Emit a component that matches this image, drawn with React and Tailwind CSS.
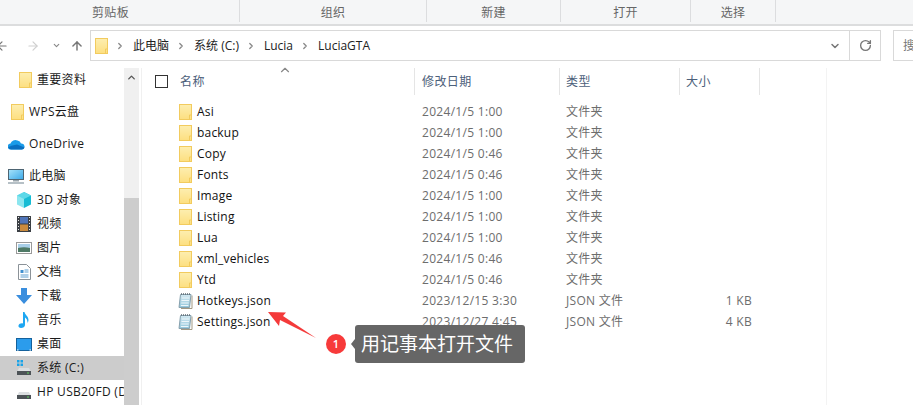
import { ArrowLeft, ArrowRight, ArrowUp, ChevronDown, ChevronRight, ChevronUp, RotateCw } from 'lucide-react';

const uiFont = { fontFamily: '"Open Sans", "Noto Sans CJK SC", sans-serif' };

const ribbonGroups = [
  { label: '剪贴板', w: 'w-[240px] pr-[18px]' },
  { label: '组织', w: 'w-[187px]' },
  { label: '新建', w: 'w-[134px]' },
  { label: '打开', w: 'w-[130px]' },
  { label: '选择', w: 'w-[85px]' },
];

const files = [
  { name: 'Asi', date: '2024/1/5 1:00', type: '文件夹' },
  { name: 'backup', date: '2024/1/5 1:00', type: '文件夹' },
  { name: 'Copy', date: '2024/1/5 0:46', type: '文件夹' },
  { name: 'Fonts', date: '2024/1/5 0:46', type: '文件夹' },
  { name: 'Image', date: '2024/1/5 1:00', type: '文件夹' },
  { name: 'Listing', date: '2024/1/5 1:00', type: '文件夹' },
  { name: 'Lua', date: '2024/1/5 1:00', type: '文件夹' },
  { name: 'xml_vehicles', date: '2024/1/5 0:46', type: '文件夹' },
  { name: 'Ytd', date: '2024/1/5 0:46', type: '文件夹' },
  { name: 'Hotkeys.json', date: '2023/12/15 3:30', type: 'JSON 文件', size: '1 KB', note: true },
  { name: 'Settings.json', date: '2023/12/27 4:45', type: 'JSON 文件', size: '4 KB', note: true },
];

function FolderIcon() {
  return (
    <svg width="13" height="16" viewBox="0 0 13 16" className="shrink-0">
      <defs>
        <linearGradient id="folderFill" x1="0" y1="0" x2="0" y2="1">
          <stop offset="0" stopColor="#fdeeb0" />
          <stop offset="1" stopColor="#fddf80" />
        </linearGradient>
      </defs>
      <rect x="0.5" y="0.5" width="12" height="15" fill="url(#folderFill)" stroke="#f2cb5e" />
      <path d="M10.5 11v4.5M10.5 11h2" stroke="#f2cb5e" fill="none" />
    </svg>
  );
}

function NoteIcon() {
  return (
    <svg width="15" height="16" viewBox="0 0 15 16" className="shrink-0">
      <defs>
        <linearGradient id="noteFill" x1="0" y1="0" x2="0" y2="1">
          <stop offset="0" stopColor="#d3e9f2" />
          <stop offset="1" stopColor="#93c7db" />
        </linearGradient>
      </defs>
      <path d="M14 2.500v13H3" stroke="#a39a84" fill="none" />
      <path d="M2.500 1.500h10.500l-1.500 13H1z" fill="url(#noteFill)" stroke="#86a0ad" />
      <path d="M3.800 5h7.500M3.500 7.500h7.500M3.200 10h7.500M2.900 12.500h7.500" stroke="#edf6fa" />
      <path d="M3 1h10" stroke="#5f6b74" strokeDasharray="1 1" strokeWidth="1.500" />
    </svg>
  );
}

function DriveIcon({ windows }) {
  return (
    <svg width="16" height="16" viewBox="0 0 16 16" className="shrink-0">
      {windows && <path d="M1 0h2.500v2.500H1zM4.500 0H7v2.500H4.500zM1 3.500h2.500V6H1zM4.500 3.500H7V6H4.500z" fill="#19a3e8" />}
      <path d="M3 8h10l1.500 3h-13z" fill="#dcdfe1" />
      <rect x="1" y="11" width="14" height="4" fill="#4c5256" />
      <rect x="11" y="12.500" width="2" height="1" fill="#5fd35f" />
    </svg>
  );
}

function SideIcon({ kind }) {
  if (kind === 'folder') return <FolderIcon />;
  if (kind === 'drive') return <DriveIcon />;
  if (kind === 'system') return <DriveIcon windows />;
  if (kind === 'cloud') {
    return (
      <svg width="17" height="12" viewBox="0 0 17 12" className="shrink-0">
        <path d="M3 11.500a3 3 0 0 1-.5-6A5 5 0 0 1 9.500 2.500a4 4 0 0 1 3.500 3 3 3 0 0 1 1 6z" fill="#1a9be8" />
        <path d="M3 11.500a3 3 0 0 1-2.800-2.500C3 8 6 7 9 6.500l7.500 3a3 3 0 0 1-2.500 2z" fill="#0a6fc0" />
      </svg>
    );
  }
  if (kind === 'pc') {
    return (
      <svg width="16" height="15" viewBox="0 0 16 15" className="shrink-0">
        <defs>
          <linearGradient id="pcFill" x1="0" y1="0" x2="1" y2="1">
            <stop offset="0" stopColor="#a8e4fb" />
            <stop offset="1" stopColor="#3aa8e8" />
          </linearGradient>
        </defs>
        <rect x="0.500" y="0.500" width="15" height="10" fill="url(#pcFill)" stroke="#4d6472" />
        <rect x="5" y="11" width="6" height="1.500" fill="#9aa5ac" />
        <rect y="13" width="16" height="2" fill="#b6c0c6" />
      </svg>
    );
  }
  if (kind === 'cube') {
    return (
      <svg width="16" height="16" viewBox="0 0 16 16" className="shrink-0">
        <path d="M8 0l7 3.500v9L8 16z" fill="#17bcd4" />
        <path d="M8 0L1 3.500v9L8 16z" fill="#8ce6ef" />
        <path d="M1 3.500L8 7l7-3.500L8 0z" fill="#5cd8e8" />
      </svg>
    );
  }
  if (kind === 'video') {
    return (
      <svg width="14" height="16" viewBox="0 0 14 16" className="shrink-0">
        <rect width="14" height="16" fill="#3b3f44" />
        <rect x="3" y="1" width="8" height="6.500" fill="#4f74b8" />
        <rect x="3" y="8.500" width="8" height="6.500" fill="#c98a3d" />
        <path d="M1 1h1v1H1zM1 4h1v1H1zM1 7h1v1H1zM1 10h1v1H1zM1 13h1v1H1zM12 1h1v1h-1zM12 4h1v1h-1zM12 7h1v1h-1zM12 10h1v1h-1zM12 13h1v1h-1z" fill="#e6e6e6" />
      </svg>
    );
  }
  if (kind === 'picture') {
    return (
      <svg width="16" height="12" viewBox="0 0 16 12" className="shrink-0">
        <rect x="0.500" y="0.500" width="15" height="11" fill="#fff" stroke="#9a9a9a" />
        <rect x="2" y="2" width="12" height="4" fill="#a9cfe8" />
        <path d="M2 6c4-1 8-1 12 0v4H2z" fill="#4f7a66" />
      </svg>
    );
  }
  if (kind === 'doc') {
    return (
      <svg width="13" height="16" viewBox="0 0 13 16" className="shrink-0">
        <path d="M0.500 0.500h8l4 4v11h-12z" fill="#fff" stroke="#8b9298" />
        <path d="M2.500 6h3v3h-3z" fill="#3f8fcf" />
        <path d="M6.500 6h4M6.500 8h4M2.500 11h8M2.500 13h8" stroke="#5f9fd0" />
      </svg>
    );
  }
  if (kind === 'download') {
    return (
      <svg width="16" height="16" viewBox="0 0 16 16" className="shrink-0">
        <path d="M5 0h6v7h5l-8 9-8-9h5z" fill="#3a8ede" />
      </svg>
    );
  }
  if (kind === 'music') {
    return (
      <svg width="12" height="16" viewBox="0 0 12 16" className="shrink-0">
        <path d="M5 0h1.500c.5 3 4 4 4 8 0 1-.3 2-1 3 .3-3-1.500-5-2.500-5.500V13c0 2-2 3-4 3-1.500 0-3-1-2.500-2.500C1 12 3 11 5 11.500z" fill="#1ea7f2" />
      </svg>
    );
  }
  return (
    <svg width="16" height="13" viewBox="0 0 16 13" className="shrink-0">
      <rect x="0.500" y="0.500" width="15" height="12" fill="#2b9cec" stroke="#14619c" />
      <path d="M1 12h1.500M13.500 12H15" stroke="#fff" />
    </svg>
  );
}

function SideItem({ icon, label, indent = 'pl-[16px]', gap = 'gap-[5px]', active }) {
  return (
    <div className={`flex h-6 items-center ${indent} ${gap} ${active ? 'bg-[#cccccc]' : ''}`}>
      <span className="flex w-4 shrink-0 justify-center">
        <SideIcon kind={icon} />
      </span>
      <span className="whitespace-nowrap text-[12px] tracking-[0.3px] text-[#1a1a1a]">{label}</span>
    </div>
  );
}

function Sidebar() {
  return (
    <div className="flex w-[142px] shrink-0 overflow-hidden border-r border-[#f0f0f0]">
      <div className="w-[124px] shrink-0 overflow-hidden">
        <SideItem icon="folder" label="重要资料" indent="pl-[17px]" gap="gap-[4px]" />
        <div className="h-[8px]" />
        <SideItem icon="folder" label="WPS云盘" indent="pl-[9px]" gap="gap-[4px]" />
        <div className="h-[8px]" />
        <SideItem icon="cloud" label="OneDrive" indent="pl-[8px]" />
        <div className="h-[8px]" />
        <SideItem icon="pc" label="此电脑" indent="pl-[8px]" />
        <SideItem icon="cube" label="3D 对象" />
        <SideItem icon="video" label="视频" />
        <SideItem icon="picture" label="图片" />
        <SideItem icon="doc" label="文档" />
        <SideItem icon="download" label="下载" />
        <SideItem icon="music" label="音乐" />
        <SideItem icon="desktop" label="桌面" />
        <SideItem icon="system" label="系统 (C:)" active />
        <SideItem icon="drive" label="HP USB20FD (D" />
      </div>
      <div className="flex w-[15px] shrink-0 flex-col bg-[#f0f0f0]">
        <div className="flex h-[130px] justify-center pt-[4px] text-[#555]">
          <ChevronUp size={11} strokeWidth={3} />
        </div>
        <div className="flex-1 bg-[#cdcdcd]" />
      </div>
    </div>
  );
}

function HeaderCell({ label, w }) {
  return (
    <div className={`flex h-[27px] items-center border-r border-[#e5e5e5] text-[12px] tracking-[0.4px] text-[#4c607a] ${w}`}>
      {label}
    </div>
  );
}

function FileRow({ file }) {
  return (
    <div className="flex h-[21px] items-center text-[12px]">
      <div className="flex w-[280px] shrink-0 items-center gap-[5px] pl-[37px]">
        <span className="flex w-[13px] justify-center">{file.note ? <NoteIcon /> : <FolderIcon />}</span>
        <span className="text-[12px] tracking-[0.2px] text-[#111]">{file.name}</span>
      </div>
      <div className="w-[144px] shrink-0 tracking-[0.3px] text-[#6d6d6d]">{file.date}</div>
      <div className="w-[114px] shrink-0 tracking-[0.3px] text-[#6d6d6d]">{file.type}</div>
      <div className="w-[72px] shrink-0 text-right tracking-[0.3px] text-[#6d6d6d]">{file.size}</div>
    </div>
  );
}

function Crumb({ label }) {
  return (
    <>
      <ChevronRight size={10} strokeWidth={3} className="ml-[7px] text-[#888]" />
      <span className="ml-[8px]">{label}</span>
    </>
  );
}

export default function App() {
  return (
    <div className="relative flex h-[405px] w-[913px] flex-col overflow-hidden bg-white" style={uiFont}>
      <div className="flex h-[26px] shrink-0 items-start border-b-2 border-[#dcddde] bg-[#f5f6f7]">
        {ribbonGroups.map((g) => (
          <div key={g.label} className={`flex h-[22px] items-end justify-center border-r border-[#dcdddf] text-[12px] tracking-[0.3px] text-[#666] ${g.w}`}>
            {g.label}
          </div>
        ))}
      </div>

      <div className="flex h-[42px] shrink-0 items-start pt-[4px]">
        <div className="flex h-[31px] w-[90px] shrink-0 items-center">
          <ArrowLeft size={14} className="ml-[-5px] text-[#777]" />
          <ArrowRight size={14} className="ml-[17px] text-[#cfcfcf]" />
          <ChevronDown size={9} strokeWidth={3} className="ml-[12px] text-[#888]" />
          <ArrowUp size={14} strokeWidth={2.5} className="ml-[9px] text-[#777]" />
        </div>
        <div className="flex h-[31px] w-[791px] shrink-0 items-center border border-[#d9d9d9]">
          <span className="ml-[4px]"><FolderIcon /></span>
          <div className="flex flex-1 items-center text-[12px] text-[#222]">
            <Crumb label="此电脑" />
            <Crumb label="系统 (C:)" />
            <Crumb label="Lucia" />
            <Crumb label="LuciaGTA" />
          </div>
          <ChevronDown size={12} strokeWidth={3} className="mr-[8px] text-[#777]" />
          <div className="flex h-full w-[31px] items-center justify-center border-l border-[#d9d9d9]">
            <RotateCw size={13} strokeWidth={2.5} className="text-[#777]" />
          </div>
        </div>
        <div className="ml-[12px] flex h-[31px] flex-1 items-center border border-[#d9d9d9] pl-[9px] text-[12px] text-[#777]">
          搜
        </div>
      </div>

      <div className="flex min-h-0 flex-1">
        <Sidebar />
        <div className="relative min-w-0 flex-1">
          <div className="flex">
            <div className="flex w-[31px] shrink-0 items-center pl-[13px]">
              <div className="size-[13px] border border-[#333]" />
            </div>
            <HeaderCell label="名称" w="w-[242px] pl-[7px]" />
            <HeaderCell label="修改日期" w="w-[145px] pl-[7px]" />
            <HeaderCell label="类型" w="w-[120px] pl-[6px]" />
            <HeaderCell label="大小" w="w-[80px] pl-[6px]" />
          </div>
          <ChevronUp size={14} className="absolute left-[136px] -top-[5px] text-[#888]" />
          <div className="pt-[6px]">
            {files.map((f) => (
              <FileRow key={f.name} file={f} />
            ))}
          </div>
          <div className="absolute bottom-0 left-[684px] top-0 w-px bg-[#f3f3f3]" />
        </div>
      </div>

      <svg width="60" height="40" viewBox="0 0 60 40" className="absolute left-[262px] top-[306px]">
        <path d="M6 6L24 6.500 21 10 54 32 18 14 17 20z" fill="#f43a3a" />
      </svg>
      <div className="absolute left-[326px] top-[325px] flex items-center">
        <div className="flex size-5 items-center justify-center rounded-full bg-[#f73a3a] text-[11px] font-semibold text-white">1</div>
        <div className="ml-[5px] size-0 border-y-[5px] border-r-[4px] border-y-transparent border-r-[#666]" />
        <div className="flex h-[38px] w-[170px] items-center rounded-[3px] bg-[#666666] pl-[6px] text-[19px] text-white">
          用记事本打开文件
        </div>
      </div>
    </div>
  );
}
